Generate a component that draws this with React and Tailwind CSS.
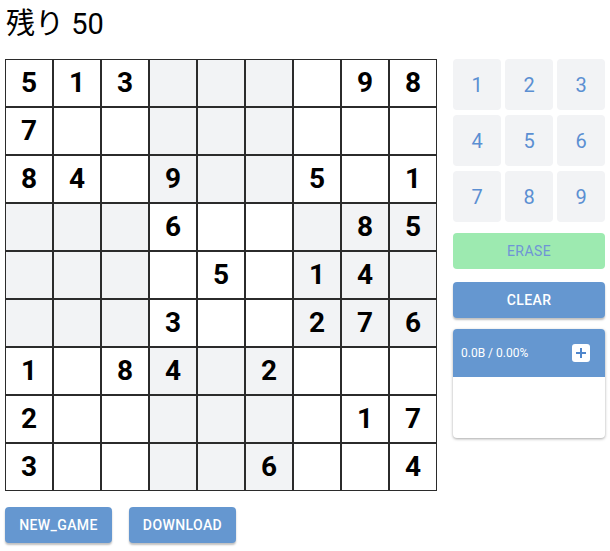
const BOARD = [
  [5, 1, 3, 0, 0, 0, 0, 9, 8],
  [7, 0, 0, 0, 0, 0, 0, 0, 0],
  [8, 4, 0, 9, 0, 0, 5, 0, 1],
  [0, 0, 0, 6, 0, 0, 0, 8, 5],
  [0, 0, 0, 0, 5, 0, 1, 4, 0],
  [0, 0, 0, 3, 0, 0, 2, 7, 6],
  [1, 0, 8, 4, 0, 2, 0, 0, 0],
  [2, 0, 0, 0, 0, 0, 0, 1, 7],
  [3, 0, 0, 0, 0, 6, 0, 0, 4],
]

const FONT = { fontFamily: 'Roboto, "Noto Sans CJK JP", sans-serif' }

function Cell({ value, row, col }) {
  // checkerboard of 3x3 boxes
  const shaded = (Math.floor(row / 3) + Math.floor(col / 3)) % 2 === 1
  return (
    <div
      className={`w-12 h-12 border border-[#2b2b2b] flex items-center justify-center text-[28px] font-bold text-black ${
        shaded ? 'bg-[#f2f3f5]' : 'bg-white'
      }`}
    >
      {value || ''}
    </div>
  )
}

function PadButton({ n }) {
  return (
    <button className="h-[51px] rounded bg-[#f2f3f5] text-[#5b8fd2] text-[20px] flex items-center justify-center">
      {n}
    </button>
  )
}

function BlueButton({ children, className = '' }) {
  return (
    <button
      className={`h-9 rounded bg-[#6597d0] text-white text-sm font-medium uppercase tracking-[0.4px] shadow-[0_2px_2px_rgba(0,0,0,0.25)] ${className}`}
    >
      {children}
    </button>
  )
}

export default function App() {
  const remaining = BOARD.flat().filter(v => v === 0).length

  return (
    <div className="w-[610px] h-[551px] bg-white px-[5px] pt-[3px]" style={FONT}>
      <div className="text-[29px] leading-[43px] text-black pl-[1px]">残り {remaining}</div>

      <div className="flex gap-4 mt-[13px]">
        <div className="grid grid-cols-9 w-[432px]">
          {BOARD.map((r, i) => r.map((v, j) => <Cell key={i + '-' + j} value={v} row={i} col={j} />))}
        </div>

        <div className="w-[152px] flex flex-col">
          <div className="grid grid-cols-3 gap-x-1 gap-y-[5px]">
            {[1, 2, 3, 4, 5, 6, 7, 8, 9].map(n => <PadButton key={n} n={n} />)}
          </div>

          <button className="h-9 mt-[11px] rounded bg-[#9deab0] text-[#6f94d6] text-sm uppercase tracking-[0.4px]">
            Erase
          </button>

          <BlueButton className="mt-[13px]">Clear</BlueButton>

          <div className="mt-[11px] rounded overflow-hidden bg-white shadow-[0_1px_3px_rgba(0,0,0,0.35)]">
            <div className="h-12 bg-[#6597d0] flex items-center justify-between pl-2 pr-[15px]">
              <span className="text-white text-xs">0.0B / 0.00%</span>
              <span className="w-[18px] h-[18px] bg-white rounded-[3px] flex items-center justify-center">
                <svg width="12" height="12" viewBox="0 0 12 12">
                  <path d="M6 1v10M1 6h10" stroke="#4f86cc" strokeWidth="2" />
                </svg>
              </span>
            </div>
            <div className="h-[61px]" />
          </div>
        </div>
      </div>

      <div className="flex gap-[17px] mt-4">
        <BlueButton className="w-[107px]">New_Game</BlueButton>
        <BlueButton className="w-[107px]">Download</BlueButton>
      </div>
    </div>
  )
}
